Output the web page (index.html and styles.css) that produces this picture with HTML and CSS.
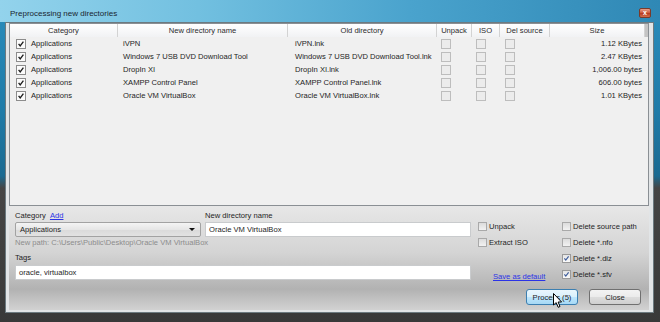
FILE: index.html
```html
<!DOCTYPE html>
<html>
  <head>
    <meta charset="UTF-8">
    <title>Preprocessing new directories</title>
    <link rel="stylesheet" href="styles.css">
  </head>
  <body>
    <div class="window">
      <div class="titlebar">
        <span class="title">Preprocessing new directories</span>
        <span class="close">x</span>
      </div>
      <div class="frame">
        <div class="list">
          <div class="cols head">
            <div>Category</div>
            <div>New directory name</div>
            <div>Old directory</div>
            <div>Unpack</div>
            <div>ISO</div>
            <div>Del source</div>
            <div>Size</div>
            <div class="head-end"></div>
          </div>
          <div class="cols row">
            <div class="c-cat"><span class="cb on"><svg viewBox="0 0 9 9"><path d="M1.8 4.3 L3.6 6.6 L7.2 1.8"/></svg></span>Applications</div>
            <div class="c-new">iVPN</div>
            <div class="c-old">iVPN.lnk</div>
            <div class="c-chk"><span class="cb"></span></div>
            <div class="c-chk"><span class="cb"></span></div>
            <div class="c-chk wide"><span class="cb"></span></div>
            <div class="c-size">1.12 KBytes</div>
          </div>
          <div class="cols row">
            <div class="c-cat"><span class="cb on"><svg viewBox="0 0 9 9"><path d="M1.8 4.3 L3.6 6.6 L7.2 1.8"/></svg></span>Applications</div>
            <div class="c-new">Windows 7 USB DVD Download Tool</div>
            <div class="c-old">Windows 7 USB DVD Download Tool.lnk</div>
            <div class="c-chk"><span class="cb"></span></div>
            <div class="c-chk"><span class="cb"></span></div>
            <div class="c-chk wide"><span class="cb"></span></div>
            <div class="c-size">2.47 KBytes</div>
          </div>
          <div class="cols row">
            <div class="c-cat"><span class="cb on"><svg viewBox="0 0 9 9"><path d="M1.8 4.3 L3.6 6.6 L7.2 1.8"/></svg></span>Applications</div>
            <div class="c-new">DropIn XI</div>
            <div class="c-old">DropIn XI.lnk</div>
            <div class="c-chk"><span class="cb"></span></div>
            <div class="c-chk"><span class="cb"></span></div>
            <div class="c-chk wide"><span class="cb"></span></div>
            <div class="c-size">1,006.00 bytes</div>
          </div>
          <div class="cols row">
            <div class="c-cat"><span class="cb on"><svg viewBox="0 0 9 9"><path d="M1.8 4.3 L3.6 6.6 L7.2 1.8"/></svg></span>Applications</div>
            <div class="c-new">XAMPP Control Panel</div>
            <div class="c-old">XAMPP Control Panel.lnk</div>
            <div class="c-chk"><span class="cb"></span></div>
            <div class="c-chk"><span class="cb"></span></div>
            <div class="c-chk wide"><span class="cb"></span></div>
            <div class="c-size">606.00 bytes</div>
          </div>
          <div class="cols row">
            <div class="c-cat"><span class="cb on"><svg viewBox="0 0 9 9"><path d="M1.8 4.3 L3.6 6.6 L7.2 1.8"/></svg></span>Applications</div>
            <div class="c-new">Oracle VM VirtualBox</div>
            <div class="c-old">Oracle VM VirtualBox.lnk</div>
            <div class="c-chk"><span class="cb"></span></div>
            <div class="c-chk"><span class="cb"></span></div>
            <div class="c-chk wide"><span class="cb"></span></div>
            <div class="c-size">1.01 KBytes</div>
          </div>
        </div>

        <div class="panel">
          <div class="panel-top">
            <div class="fields">
              <div class="pair labels">
                <div>Category <a class="link">Add</a></div>
                <div>New directory name</div>
              </div>
              <div class="pair">
                <div class="combo">Applications<span class="arrow"></span></div>
                <div class="input">Oracle VM VirtualBox</div>
              </div>
              <div class="newpath">New path: C:\Users\Public\Desktop\Oracle VM VirtualBox</div>
              <div class="tags-label">Tags</div>
              <div class="input">oracle, virtualbox</div>
            </div>
            <div class="opts opts-mid">
              <div class="opt"><span class="cb box"></span>Unpack</div>
              <div class="opt"><span class="cb box"></span>Extract ISO</div>
              <div class="opt"></div>
              <div class="opt save"><a class="link">Save as default</a></div>
            </div>
            <div class="opts">
              <div class="opt"><span class="cb box"></span>Delete source path</div>
              <div class="opt"><span class="cb box"></span>Delete *.nfo</div>
              <div class="opt"><span class="cb box on"><svg viewBox="0 0 9 9"><path d="M1.8 4.3 L3.6 6.6 L7.2 1.8"/></svg></span>Delete *.diz</div>
              <div class="opt"><span class="cb box on"><svg viewBox="0 0 9 9"><path d="M1.8 4.3 L3.6 6.6 L7.2 1.8"/></svg></span>Delete *.sfv</div>
            </div>
          </div>
          <div class="buttons">
            <button type="button" class="btn hot">Process (5)</button>
            <button type="button" class="btn">Close</button>
          </div>
        </div>
      </div>
      <svg class="cursor" viewBox="0 0 10 16" width="10" height="16">
        <path d="M0.5 0.5 L0.5 12 L3.2 9.6 L5.2 14.3 L7 13.5 L5.1 9 L8.6 9 Z"/>
      </svg>
    </div>
  </body>
</html>
```

FILE: styles.css
```css
* {
  box-sizing: border-box;
}
body {
  margin: 0;
  width: 660px;
  height: 322px;
  overflow: hidden;
  font-family: "Liberation Sans", Arial, sans-serif;
  font-size: 7.6px;
  color: #1e1e1e;
}
.window {
  position: relative;
  height: 322px;
  background: linear-gradient(180deg, #2b8dbc 0px, #1f7ba8 110px, #1a6a91 176px, #454545 188px, #393939 100%);
}
.titlebar {
  display: flex;
  align-items: flex-start;
  height: 22px;
  padding: 0 9px 0 10px;
  background: linear-gradient(90deg, #93d3ec 0%, #72c0e0 30%, #4aa3cd 62%, #2f88b5 100%);
}
.title {
  font-size: 8px;
  line-height: 10px;
  color: #1a2630;
  padding-top: 9px;
}
.close {
  margin-left: auto;
  margin-top: 8px;
  width: 12px;
  height: 10px;
  line-height: 8px;
  text-align: center;
  font-size: 7px;
  font-weight: bold;
  color: #fff;
  border: 1px solid #7a3a2a;
  border-radius: 2px;
  background: linear-gradient(#e8a08c, #c9573a 50%, #b8381c 51%, #d0704f);
}
.frame {
  margin: 0 6px 0 5px;
  padding: 0 4px 2px 3px;
  border: 1px solid #6c7a80;
  background: #e2e5e7;
}

/* list */
.list {
  height: 183px;
  border: 1px solid #8a8f94;
  background: #f0f0f0;
}
.cols {
  display: grid;
  grid-template-columns: 108px 170px 149px 35px 28px 50px 95px 1fr;
}
.head {
  height: 13px;
  line-height: 13px;
  color: #2c2c2c;
  text-align: center;
  border-bottom: 1px solid #e2e2e2;
}
.head > div {
  border-right: 1px solid #d3d3d3;
  background: linear-gradient(#ffffff, #f1f2f4);
}
.head > .head-end {
  border-right: none;
  background: #c4c4c4;
}
.row {
  height: 13px;
  align-items: center;
  white-space: nowrap;
}
.c-cat {
  display: flex;
  align-items: center;
  gap: 5px;
  padding-left: 6px;
}
.c-new {
  padding-left: 5px;
}
.c-old {
  padding-left: 7px;
}
.c-chk {
  display: flex;
  padding-left: 4px;
}
.c-chk.wide {
  padding-left: 5px;
}
.c-size {
  text-align: right;
  padding-right: 3px;
}
.cb {
  display: inline-block;
  flex: none;
  width: 10px;
  height: 10px;
  border: 1px solid #bdbdbd;
  background: #ececec;
}
.cb.on {
  border-color: #8c8c8c;
  background: #fbfbfb;
}
.cb svg {
  display: block;
  width: 8px;
  height: 8px;
}
.cb svg path {
  fill: none;
  stroke: #1c1c1c;
  stroke-width: 1.5;
}

/* bottom panel */
.panel {
  display: flex;
  flex-direction: column;
  height: 104px;
  padding: 4px 8px 5px 6px;
  background: linear-gradient(#e7e7e7 0%, #d4d4d4 45%, #bababa 72%, #b2b2b2 80%, #d2d2d2 100%);
}
.panel-top {
  display: flex;
}
.fields {
  width: 456px;
  display: flex;
  flex-direction: column;
}
.pair {
  display: grid;
  grid-template-columns: 186px 266px;
  gap: 4px;
}
.labels {
  height: 12px;
  line-height: 12px;
}
.link {
  color: #2b33e6;
  text-decoration: underline;
  margin-left: 2px;
}
.combo {
  display: flex;
  align-items: center;
  height: 15px;
  padding: 0 5px 0 4px;
  border: 1px solid #a2a2a2;
  border-radius: 2px;
  background: linear-gradient(#f4f4f4, #e6e6e6 50%, #dadada 51%, #e2e2e2);
}
.arrow {
  margin-left: auto;
  border-left: 3px solid transparent;
  border-right: 3px solid transparent;
  border-top: 3px solid #111;
}
.input {
  height: 15px;
  line-height: 13px;
  padding-left: 3px;
  border: 1px solid #c9cbcd;
  background: #ffffff;
}
.newpath {
  height: 11px;
  line-height: 11px;
  color: #8c8c8c;
}
.tags-label {
  height: 12px;
  line-height: 12px;
  margin-top: 4px;
  margin-bottom: 1px;
}
.opts {
  display: flex;
  flex-direction: column;
  padding-top: 8px;
}
.opts-mid {
  width: 84px;
  margin-left: 7px;
}
.opt {
  display: flex;
  align-items: center;
  height: 16px;
  white-space: nowrap;
}
.cb.box {
  width: 9px;
  height: 9px;
  margin-right: 2px;
  border-color: #a9a9a9;
  background: linear-gradient(#dcdcdc, #f2f2f2);
}
.cb.box.on {
  border-color: #9a9a9a;
  background: linear-gradient(#e4e4e4, #fafafa);
}
.cb.box svg {
  width: 7px;
  height: 7px;
}
.cb.box svg path {
  stroke: #3d5c9a;
}
.save {
  margin-top: 2px;
  padding-left: 15px;
}
.save .link {
  margin-left: 0;
}
.buttons {
  display: flex;
  justify-content: flex-end;
  gap: 11px;
  margin-top: auto;
}
.btn {
  width: 52px;
  height: 16px;
  padding: 0;
  font-family: inherit;
  font-size: 7.6px;
  color: #1e1e1e;
  border: 1px solid #707070;
  border-radius: 3px;
  background: linear-gradient(#f3f3f3, #ebebeb 50%, #dddddd 51%, #cfcfcf);
}
.btn.hot {
  border-color: #3c7fb1;
  background: linear-gradient(#eaf6fd, #d9f0fc 50%, #bee6fd 51%, #a7d9f5);
}
.cursor {
  position: absolute;
  left: 553px;
  top: 293px;
}
.cursor path {
  fill: #ffffff;
  stroke: #000000;
  stroke-width: 1;
}
```
